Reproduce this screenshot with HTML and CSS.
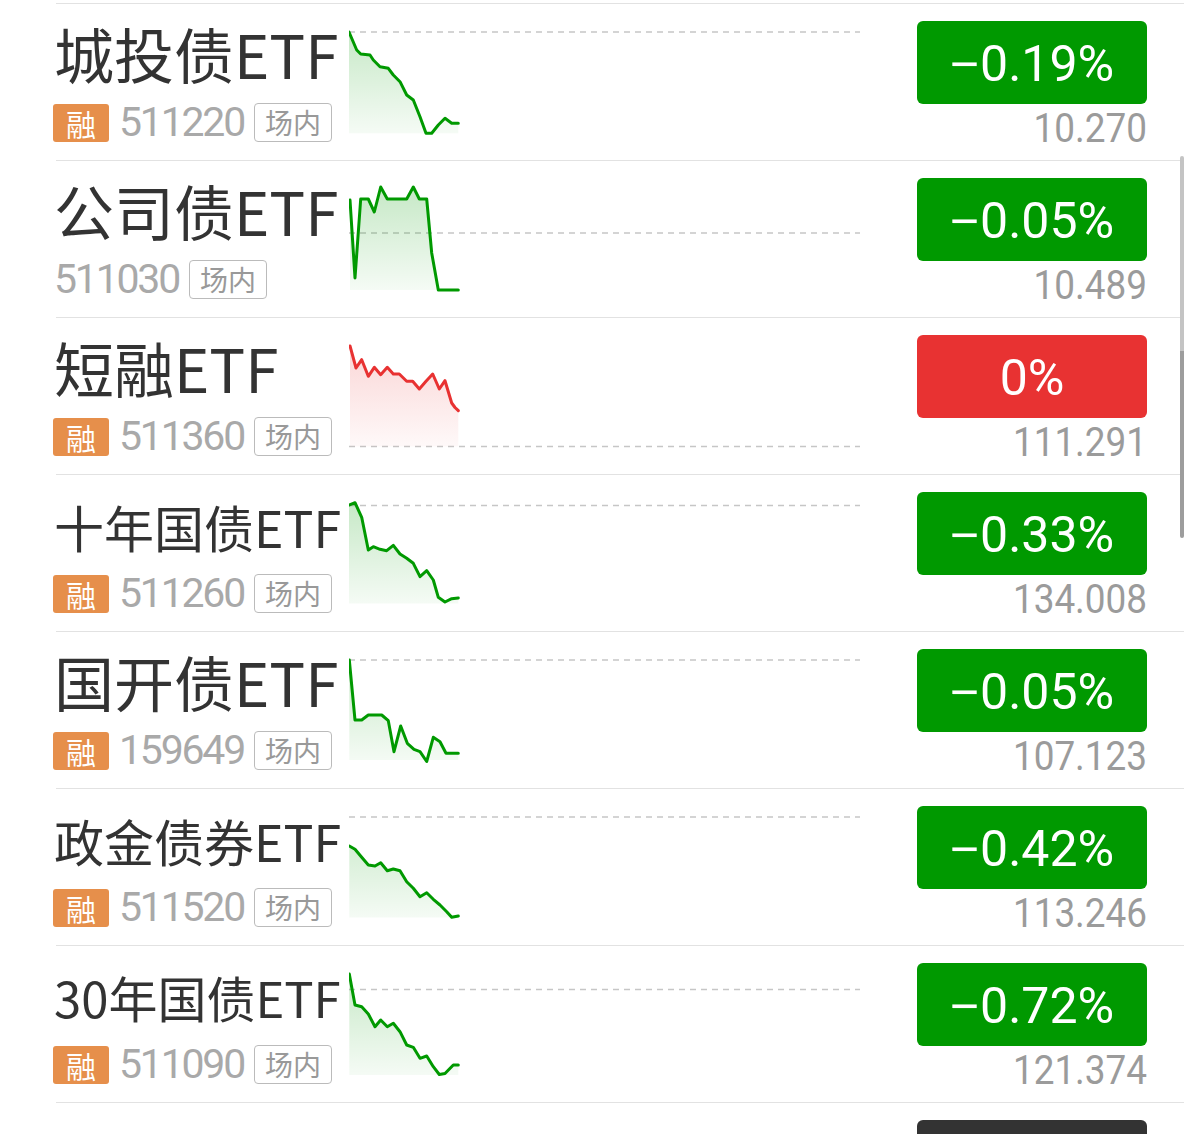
FILE: index.html
```html
<!DOCTYPE html>
<html lang="zh-CN">
<head>
  <meta charset="UTF-8">
  <meta name="viewport" content="width=device-width, initial-scale=1.0">
  <title>债券ETF行情列表</title>
  <link rel="stylesheet" href="styles.css">
</head>
<body>
  <div class="list">
    <!-- 城投债ETF -->
    <div class="row">
      <div class="info">
        <div class="name">城投债ETF</div>
        <div class="meta"><span class="rong">融</span><span class="code">511220</span><span class="tag">场内</span></div>
      </div>
      <svg class="spark" viewBox="0 0 511 156">
        <defs>
          <linearGradient id="fillGreen" gradientUnits="userSpaceOnUse" x1="0" y1="28" x2="0" y2="129">
            <stop offset="0" stop-color="#009900" stop-opacity="0.22"/>
            <stop offset="1" stop-color="#009900" stop-opacity="0.04"/>
          </linearGradient>
          <linearGradient id="fillRed" gradientUnits="userSpaceOnUse" x1="0" y1="28" x2="0" y2="129">
            <stop offset="0" stop-color="#e83232" stop-opacity="0.2"/>
            <stop offset="1" stop-color="#e83232" stop-opacity="0.03"/>
          </linearGradient>
        </defs>
        <line class="base" x1="0" y1="28" x2="511" y2="28"/>
        <polygon class="area-down" points="0,28 7.7,46 11.7,50 21,51 24.3,56 31,62.7 39.3,64.3 44.3,71 51,77.7 57.7,91 64.3,96 71,112.7 77,129.3 82.7,129.3 89.3,121 96,114.3 102.7,119.3 109.3,119.3 109.3,129.3 0,129.3"/>
        <polyline class="line-down" points="0,28 7.7,46 11.7,50 21,51 24.3,56 31,62.7 39.3,64.3 44.3,71 51,77.7 57.7,91 64.3,96 71,112.7 77,129.3 82.7,129.3 89.3,121 96,114.3 102.7,119.3 109.3,119.3"/>
      </svg>
      <div class="quote">
        <div class="change down"><span class="minus">−</span>0.19%</div>
        <div class="price"><span>10.270</span></div>
      </div>
    </div>

    <!-- 公司债ETF -->
    <div class="row">
      <div class="info">
        <div class="name">公司债ETF</div>
        <div class="meta"><span class="code code-first">511030</span><span class="tag">场内</span></div>
      </div>
      <svg class="spark" viewBox="0 0 511 156">
        <line class="base" x1="0" y1="72" x2="511" y2="72"/>
        <polygon class="area-down" points="1,39 6,117 11.7,38 19.3,38 25.3,51 31.7,26 38.3,38 57.7,38 64.3,26 70.3,38 77.7,38 82.7,92 89.3,129 109.3,129 1,129"/>
        <polyline class="line-down" points="1,39 6,117 11.7,38 19.3,38 25.3,51 31.7,26 38.3,38 57.7,38 64.3,26 70.3,38 77.7,38 82.7,92 89.3,129 109.3,129"/>
      </svg>
      <div class="quote">
        <div class="change down"><span class="minus">−</span>0.05%</div>
        <div class="price"><span>10.489</span></div>
      </div>
    </div>

    <!-- 短融ETF -->
    <div class="row">
      <div class="info">
        <div class="name">短融ETF</div>
        <div class="meta"><span class="rong">融</span><span class="code">511360</span><span class="tag">场内</span></div>
      </div>
      <svg class="spark" viewBox="0 0 511 156">
        <line class="base" x1="0" y1="128.5" x2="511" y2="128.5"/>
        <polygon class="area-up" points="1,28 7,50 12.7,41.7 19.3,58.3 25.3,49.3 31.7,56.7 38.3,49.3 44.3,56 50.3,56 57.7,63.3 63.7,63.3 70.3,71 77,63.3 83.7,56 90.3,71 96,62.7 102.7,85 109.3,92.7 109.3,128.5 1,128.5"/>
        <polyline class="line-up" points="1,28 7,50 12.7,41.7 19.3,58.3 25.3,49.3 31.7,56.7 38.3,49.3 44.3,56 50.3,56 57.7,63.3 63.7,63.3 70.3,71 77,63.3 83.7,56 90.3,71 96,62.7 102.7,85 106,89.5 109.3,92.7"/>
      </svg>
      <div class="quote">
        <div class="change up">0%</div>
        <div class="price"><span>111.291</span></div>
      </div>
    </div>

    <!-- 十年国债ETF -->
    <div class="row">
      <div class="info">
        <div class="name name-4">十年国债ETF</div>
        <div class="meta"><span class="rong">融</span><span class="code">511260</span><span class="tag">场内</span></div>
      </div>
      <svg class="spark" viewBox="0 0 511 156">
        <line class="base" x1="0" y1="30.5" x2="511" y2="30.5"/>
        <polygon class="area-down" points="0,30 6,27.7 12.7,42.3 19.3,75 24.3,71.7 31,74.3 37.7,75.7 44.3,70.3 51,79 57.7,83.3 64.3,88.3 71,101.7 77.7,95.7 84.3,105 89.3,122.3 96,127 102.7,123.7 109.3,123 109.3,128.5 0,128.5"/>
        <polyline class="line-down" points="0,30 6,27.7 12.7,42.3 19.3,75 24.3,71.7 31,74.3 37.7,75.7 44.3,70.3 51,79 57.7,83.3 64.3,88.3 71,101.7 77.7,95.7 84.3,105 89.3,122.3 96,127 102.7,123.7 109.3,123"/>
      </svg>
      <div class="quote">
        <div class="change down"><span class="minus">−</span>0.33%</div>
        <div class="price"><span>134.008</span></div>
      </div>
    </div>

    <!-- 国开债ETF -->
    <div class="row">
      <div class="info">
        <div class="name">国开债ETF</div>
        <div class="meta"><span class="rong">融</span><span class="code">159649</span><span class="tag">场内</span></div>
      </div>
      <svg class="spark" viewBox="0 0 511 156">
        <line class="base" x1="0" y1="28" x2="511" y2="28"/>
        <polygon class="area-down" points="0.3,28 6,88 12.7,88 19.3,83 32.7,83 39.3,88.7 45,119.7 51.7,94 58.3,111.3 65,117.3 71,119.7 77.7,129.5 84.3,105.3 91,109.7 97,121.3 109.3,121.3 109.3,128 0.3,128"/>
        <polyline class="line-down" points="0.3,28 6,88 12.7,88 19.3,83 32.7,83 39.3,88.7 45,119.7 51.7,94 58.3,111.3 65,117.3 71,119.7 77.7,129.5 84.3,105.3 91,109.7 97,121.3 109.3,121.3"/>
      </svg>
      <div class="quote">
        <div class="change down"><span class="minus">−</span>0.05%</div>
        <div class="price"><span>107.123</span></div>
      </div>
    </div>

    <!-- 政金债券ETF -->
    <div class="row">
      <div class="info">
        <div class="name name-4">政金债券ETF</div>
        <div class="meta"><span class="rong">融</span><span class="code">511520</span><span class="tag">场内</span></div>
      </div>
      <svg class="spark" viewBox="0 0 511 156">
        <line class="base" x1="0" y1="28" x2="511" y2="28"/>
        <polygon class="area-down" points="0.3,57 6,60.3 12.7,68.3 19.3,76 26,77 31.7,73.7 38.3,81.7 44.3,80 51,81.7 57.7,92.7 64.3,99.3 71,107.7 77.7,103.7 84.3,110.3 91,116 97.7,122.7 102.7,128.3 109.3,127 109.3,128.5 0.3,128.5"/>
        <polyline class="line-down" points="0.3,57 6,60.3 12.7,68.3 19.3,76 26,77 31.7,73.7 38.3,81.7 44.3,80 51,81.7 57.7,92.7 64.3,99.3 71,107.7 77.7,103.7 84.3,110.3 91,116 97.7,122.7 102.7,128.3 109.3,127"/>
      </svg>
      <div class="quote">
        <div class="change down"><span class="minus">−</span>0.42%</div>
        <div class="price"><span>113.246</span></div>
      </div>
    </div>

    <!-- 30年国债ETF -->
    <div class="row">
      <div class="info">
        <div class="name name-30">30年国债ETF</div>
        <div class="meta"><span class="rong">融</span><span class="code">511090</span><span class="tag">场内</span></div>
      </div>
      <svg class="spark" viewBox="0 0 511 156">
        <line class="base" x1="0" y1="43.5" x2="511" y2="43.5"/>
        <polygon class="area-down" points="0.3,28 6,59 12.7,60.7 19.3,68 26,80.7 31.7,74 38.3,80.7 44.3,77.3 51,85.7 57.7,99 64.3,101.3 71,112.3 77.7,110 84.3,120.7 90.3,128.5 96,127.5 104.3,119 109.3,119 109.3,129 0.3,129"/>
        <polyline class="line-down" points="0.3,28 6,59 12.7,60.7 19.3,68 26,80.7 31.7,74 38.3,80.7 44.3,77.3 51,85.7 57.7,99 64.3,101.3 71,112.3 77.7,110 84.3,120.7 90.3,128.5 96,127.5 104.3,119 109.3,119"/>
      </svg>
      <div class="quote">
        <div class="change down"><span class="minus">−</span>0.72%</div>
        <div class="price"><span>121.374</span></div>
      </div>
    </div>

    <!-- 下一行，只露出一截 -->
    <div class="row">
      <div class="info"></div>
      <div class="quote">
        <div class="change flat"></div>
      </div>
    </div>
  </div>

  <div class="scrollbar"></div>
</body>
</html>
```

FILE: styles.css
```css
/* 页面基础 */
body {
  margin: 0;
  height: 1134px;
  overflow: hidden;
  background-color: #fff;
  font-family: "Noto Sans CJK SC", sans-serif;
}

/* 列表 */
.list {
  margin-left: 56px;
  padding-top: 3px;
}
.row {
  display: flex;
  align-items: flex-start;
  height: 156px;
  border-top: 1px solid #e2e2e2;
}

/* 左侧：名称 + 代码 */
.info {
  flex: none;
  width: 293px;
  padding-top: 15px;
}
.name {
  height: 70px;
  margin-left: -2px;
  margin-bottom: 13px;
  font-size: 60px;
  line-height: 68px;
  color: #333;
  white-space: nowrap;
}
/* 名称过长时缩小字号 */
.name-4 {
  font-size: 50px;
  line-height: 72px;
}
.name-30 {
  font-size: 49px;
  line-height: 72px;
}
.meta {
  display: flex;
  align-items: center;
  gap: 10px;
  height: 41px;
}
.rong {
  width: 56px;
  height: 38px;
  margin-left: -3px;
  margin-right: 0;
  border-radius: 3px;
  background-color: #e68f4b;
  color: #fff;
  font-size: 30px;
  line-height: 38px;
  text-align: center;
}
.code {
  font-family: Roboto, "Noto Sans CJK SC", sans-serif;
  font-size: 41px;
  line-height: 1;
  letter-spacing: -2.2px;
  color: #a9a9a9;
}
.code-first {
  margin-left: -2px;
}
.tag {
  box-sizing: border-box;
  height: 39px;
  padding: 0 10px;
  border: 1px solid #bbb;
  border-radius: 4px;
  font-size: 28px;
  line-height: 37px;
  color: #999;
}

/* 分时走势小图 */
.spark {
  flex: none;
  display: block;
  width: 511px;
  height: 156px;
}
.spark .base {
  stroke: #c6c6c6;
  stroke-width: 1.5;
  stroke-dasharray: 6 5;
}
.spark polyline {
  fill: none;
  stroke-width: 3;
  stroke-linejoin: round;
  stroke-linecap: round;
}
.line-down {
  stroke: #009900;
}
.line-up {
  stroke: #e83232;
}
.area-down {
  fill: url(#fillGreen);
}
.area-up {
  fill: url(#fillRed);
}

/* 右侧：涨跌幅 + 价格 */
.quote {
  flex: none;
  width: 230px;
  margin-left: auto;
  margin-right: 37px;
  padding-top: 17px;
}
.change {
  box-sizing: border-box;
  height: 83px;
  padding-top: 4px;
  border-radius: 6px;
  color: #fff;
  font-family: Roboto, sans-serif;
  font-size: 50px;
  line-height: 79px;
  text-align: center;
}
.change .minus {
  font-family: "Liberation Sans", sans-serif;
  margin-right: 1px;
}
.change.down {
  background-color: #009900;
}
.change.up {
  background-color: #e83232;
}
.change.flat {
  background-color: #333;
}
.price {
  margin-top: 4px;
  font-family: Roboto, sans-serif;
  font-size: 41px;
  line-height: 40px;
  color: #9b9b9b;
  text-align: right;
}
.price span {
  display: inline-block;
  transform: scaleX(0.9);
  transform-origin: right center;
}

/* 右侧滚动条（浮在内容上） */
.scrollbar {
  position: fixed;
  top: 156px;
  right: 0;
  width: 4px;
  height: 382px;
  border-radius: 2px;
  background: linear-gradient(#c4c4c4 0 51%, #9d9d9d 51% 100%);
}
```
